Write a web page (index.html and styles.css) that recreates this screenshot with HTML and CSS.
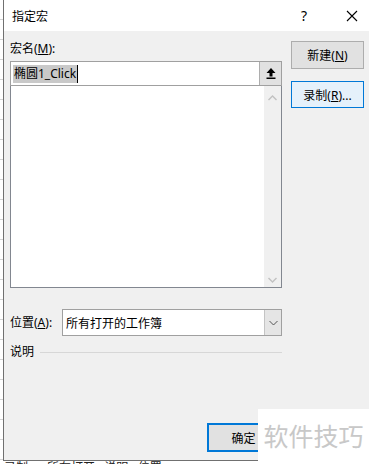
FILE: index.html
```html
<!DOCTYPE html>
<html lang="zh-CN">
<head>
    <meta charset="UTF-8">
    <meta name="viewport" content="width=device-width, initial-scale=1.0">
    <title>指定宏</title>
    <link rel="stylesheet" href="styles.css">
</head>
<body>
    <div class="sheet">
        <div class="window">
            <div class="titlebar">
                <span class="title">指定宏</span>
                <span class="help">?</span>
                <span class="close">
                    <svg width="12" height="12" viewBox="0 0 12 12"><path d="M1 1L11 11M11 1L1 11" stroke="#000" stroke-width="1.1" fill="none"/></svg>
                </span>
            </div>
            <div class="content">
                <div class="main">
                    <div class="left">
                        <div class="label">宏名(<u>M</u>):</div>
                        <div class="namebox">
                            <span class="name"><span class="sel">椭圆1_Click</span><span class="caret"></span></span>
                            <span class="upbtn">
                                <svg width="10" height="11" viewBox="0 0 10 11"><path d="M5 0L9.5 5H6.5V8.5H3.5V5H0.5Z" fill="#000"/><rect x="0.5" y="9.5" width="9" height="1.5" fill="#000"/></svg>
                            </span>
                        </div>
                        <div class="list">
                            <div class="scroll">
                                <svg width="9" height="6" viewBox="0 0 9 6"><path d="M0.5 5L4.5 1L8.5 5" stroke="#c2c2c2" stroke-width="1.4" fill="none"/></svg>
                                <svg width="9" height="6" viewBox="0 0 9 6"><path d="M0.5 1L4.5 5L8.5 1" stroke="#c2c2c2" stroke-width="1.4" fill="none"/></svg>
                            </div>
                        </div>
                        <div class="where">
                            <span class="label">位置(<u>A</u>):</span>
                            <div class="combo">
                                <span class="combo-text">所有打开的工作簿</span>
                                <span class="drop">
                                    <svg width="9" height="6" viewBox="0 0 9 6"><path d="M0.5 1L4.5 5L8.5 1" stroke="#555" stroke-width="1" fill="none"/></svg>
                                </span>
                            </div>
                        </div>
                        <div class="desc">
                            <span class="label">说明</span>
                            <span class="rule"></span>
                        </div>
                    </div>
                    <div class="right">
                        <button class="btn">新建(<u>N</u>)</button>
                        <button class="btn btn-focus">录制(<u>R</u>)...</button>
                    </div>
                </div>
                <div class="footer">
                    <button class="btn btn-default">确定</button>
                </div>
            </div>
        </div>
        <div class="below">录制... &nbsp; 所有打开 &nbsp; 说明 &nbsp; 位置</div>
        <div class="watermark">软件技巧</div>
    </div>
</body>
</html>
```

FILE: styles.css
```css
body {
    margin: 0;
    font-family: "Noto Sans", "Noto Sans CJK SC", sans-serif;
    font-size: 12px;
    color: #000;
}

.sheet {
    position: relative;
    width: 369px;
    height: 464px;
    overflow: hidden;
    background: #fff repeating-linear-gradient(to bottom, #fff 0, #fff 19px, #d4d4d4 19px, #d4d4d4 20px);
}

.window {
    margin-left: 3px;
    width: 370px;
    height: 460px;
    background: #f0f0f0;
    border-left: 1px solid #707070;
    border-bottom: 1px solid #707070;
    display: flex;
    flex-direction: column;
}

.titlebar {
    height: 31px;
    background: #fff;
    display: flex;
    align-items: center;
    flex-shrink: 0;
}

.title {
    margin-left: 8px;
    width: 289px;
}

.help {
    width: 45px;
    font-size: 14px;
}

.close {
    display: flex;
    align-items: center;
}

.content {
    padding: 10px 0 0 6px;
    flex: 1;
    display: flex;
    flex-direction: column;
}

.main {
    display: flex;
}

.left {
    width: 272px;
}

.label {
    line-height: 16px;
}

.namebox {
    margin-top: 4px;
    height: 23px;
    border: 1px solid #a0a0a0;
    background: #fff;
    display: flex;
    align-items: center;
}

.name {
    flex: 1;
    display: flex;
    align-items: center;
    padding-left: 2px;
    font-size: 12px;
}

.sel {
    background: #c9c9c9;
    line-height: 18px;
    padding: 0 1px;
}

.caret {
    width: 1px;
    height: 18px;
    background: #000;
}

.upbtn {
    width: 21px;
    height: 23px;
    background: #e1e1e1;
    border-left: 1px solid #adadad;
    display: flex;
    align-items: center;
    justify-content: center;
}

.list {
    height: 201px;
    border: 1px solid #828790;
    border-top: none;
    background: #fff;
    display: flex;
    justify-content: flex-end;
}

.scroll {
    width: 17px;
    background: #f0f0f0;
    display: flex;
    flex-direction: column;
    justify-content: space-between;
    align-items: center;
    padding: 9px 0 4px;
}

.where {
    margin-top: 21px;
    display: flex;
    align-items: center;
}

.where .label {
    width: 52px;
}

.combo {
    flex: 1;
    height: 25px;
    border: 1px solid #a0a0a0;
    background: #fff;
    display: flex;
    align-items: center;
}

.combo-text {
    flex: 1;
    padding-left: 3px;
    font-size: 12px;
}

.drop {
    width: 16px;
    height: 25px;
    background: #e5e5e5;
    border-left: 1px solid #c4c4c4;
    display: flex;
    align-items: center;
    justify-content: center;
}

.desc {
    margin-top: 8px;
    display: flex;
    align-items: center;
}

.desc .label {
    width: 30px;
}

.rule {
    flex: 1;
    height: 1px;
    background: #d7d7d7;
}

.right {
    margin-left: 9px;
    display: flex;
    flex-direction: column;
    gap: 12px;
}

.btn {
    width: 73px;
    height: 28px;
    border: 1px solid #adadad;
    background: #e1e1e1;
    font-family: inherit;
    font-size: 12px;
    padding: 0;
    color: #000;
}

.btn-focus {
    height: 27px;
    border-color: #0078d7;
    background: #e5f1fb;
}

.btn-default {
    border: 2px solid #0078d7;
    height: 29px;
}

.footer {
    margin-top: auto;
    margin-bottom: 8px;
    display: flex;
    padding-left: 197px;
}

.below {
    white-space: nowrap;
    margin-top: 0;
    padding-left: 4px;
    font-size: 12px;
    line-height: 14px;
    color: #222;
}

.watermark {
    position: absolute;
    left: 258px;
    top: 409px;
    width: 111px;
    height: 55px;
    background: #fff;
    color: #c8c8c8;
    font-size: 25px;
    line-height: 55px;
    text-align: center;
}
```
